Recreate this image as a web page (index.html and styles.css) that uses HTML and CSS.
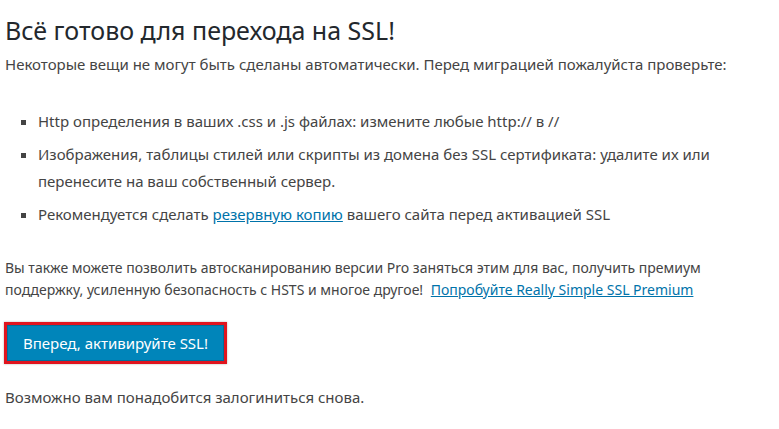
FILE: index.html
```html
<!DOCTYPE html>
<html lang="ru">
<head>
  <meta charset="UTF-8" />
  <title>Really Simple SSL</title>
  <link rel="stylesheet" href="styles.css">
</head>
<body>
  <div class="wrap">
    <h1>Всё готово для перехода на SSL!</h1>
    <p class="lead">Некоторые вещи не могут быть сделаны автоматически. Перед миграцией пожалуйста проверьте:</p>

    <ul class="checklist">
      <li>Http определения в ваших .css и .js файлах: измените любые http:// в //</li>
      <li>Изображения, таблицы стилей или скрипты из домена без SSL сертификата: удалите их или перенесите на ваш собственный сервер.</li>
      <li>Рекомендуется сделать <a href="#">резервную копию</a> вашего сайта перед активацией SSL</li>
    </ul>

    <p class="pro">Вы также можете позволить автосканированию версии Pro заняться этим для вас, получить премиум поддержку, усиленную безопасность с HSTS и многое другое! <a href="#">Попробуйте Really Simple SSL Premium</a></p>

    <div class="activate">
      <button class="btn-primary">Вперед, активируйте SSL!</button>
    </div>

    <p class="note">Возможно вам понадобится залогиниться снова.</p>
  </div>
</body>
</html>
```

FILE: styles.css
```css
body {
  margin: 0;
  background: #fff;
  font-family: "Noto Sans", "Open Sans", sans-serif;
  color: #444;
}
.wrap {
  padding: 0 5px;
  max-width: 740px;
}
h1 {
  font-size: 25px;
  font-weight: 400;
  color: #23282d;
  margin: 15px 0 8px;
  line-height: 30px;
}
.lead {
  font-size: 15px;
  margin: 0 0 33px;
  line-height: 22px;
}
a {
  color: #0073aa;
}
.checklist {
  margin: 0 0 29px;
  padding-left: 33px;
  list-style: square;
  font-size: 15px;
  line-height: 27px;
}
.checklist li {
  margin-bottom: 6px;
}
.pro {
  font-size: 14px;
  line-height: 22px;
  margin: 0 0 21px;
}
.pro a {
  margin-left: 4px;
}
.activate {
  display: inline-block;
  border: 3px solid #e0141e;
  box-shadow: 0 0 2px rgba(0,0,0,0.3);
  margin-left: -1px;
}
.btn-primary {
  display: block;
  background: #0085ba;
  color: #fff;
  border: 1px solid #006e9a;
  font-family: inherit;
  font-size: 15px;
  padding: 0 11px;
  height: 36px;
  width: 217px;
}
.note {
  font-size: 15px;
  margin: 22px 0 0;
  line-height: 22px;
}
```
